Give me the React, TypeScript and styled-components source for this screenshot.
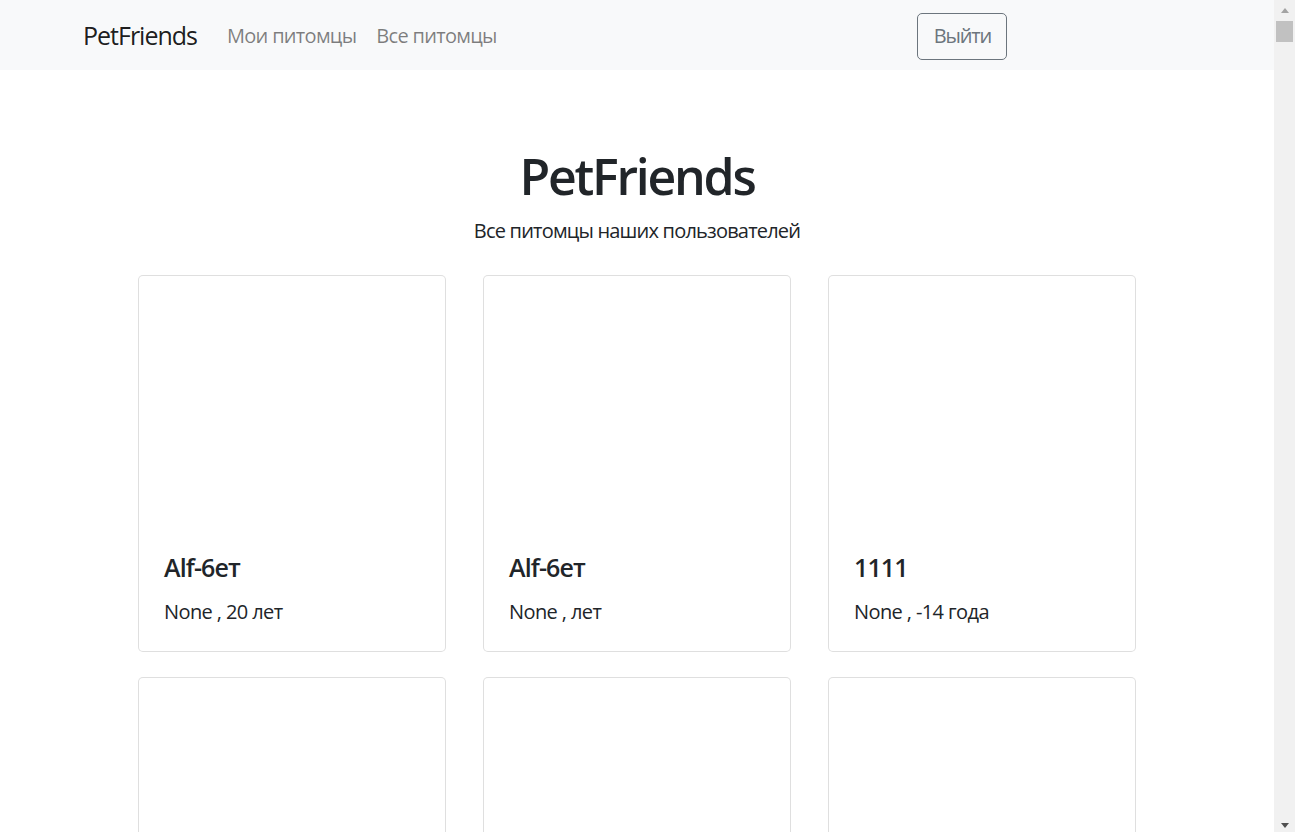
import React from "react";
import styled, { createGlobalStyle } from "styled-components";

const GlobalStyle = createGlobalStyle`
  html, body { margin: 0; padding: 0; height: 100%; overflow: hidden; }
  body {
    font-family: "Open Sans", "Noto Sans", "Liberation Sans", sans-serif;
    color: #212529;
    background: #fff;
  }
  * { box-sizing: border-box; }
`;

const Shell = styled.div`
  display: flex;
  width: 100vw;
  height: 100vh;
  overflow: hidden;
`;

const Page = styled.div`
  flex: 1;
  min-width: 0;
  overflow: hidden;
  display: flex;
  flex-direction: column;
`;

const Navbar = styled.nav`
  height: 70px;
  flex: none;
  background: #f8f9fa;
  display: flex;
  align-items: center;
  padding: 11px 0 9px 83px;
`;

const Brand = styled.a`
  font-size: 25px;
  line-height: 37.5px;
  padding: 6.25px 0;
  margin-right: 20px;
  color: rgba(0, 0, 0, 0.9);
  text-decoration: none;
  letter-spacing: -0.04em;
`;

const NavLink = styled.a`
  font-size: 20px;
  line-height: 30px;
  padding: 10px 10px;
  color: rgba(0, 0, 0, 0.5);
  text-decoration: none;
  letter-spacing: -0.035em;
`;

const LogoutButton = styled.button`
  margin-left: auto;
  margin-right: 267px;
  height: 47px;
  padding: 7px 15px 7px 16px;
  font-family: inherit;
  font-size: 20px;
  line-height: 30px;
  color: #6c757d;
  background: transparent;
  border: 1px solid #6c757d;
  border-radius: 5px;
  letter-spacing: -0.06em;
`;

const Hero = styled.header`
  text-align: center;
  padding-top: 76px;
`;

const Title = styled.h1`
  margin: 0;
  font-size: 50px;
  line-height: 60px;
  font-weight: 600;
  letter-spacing: -0.045em;
`;

const Subtitle = styled.p`
  margin: 10px 0 0;
  font-size: 20px;
  line-height: 30px;
  letter-spacing: -0.04em;
`;

const Grid = styled.section`
  display: grid;
  grid-template-columns: repeat(3, 308px);
  column-gap: 37px;
  row-gap: 25px;
  justify-content: center;
  margin-top: 29px;
`;

const Card = styled.article`
  border: 1px solid rgba(0, 0, 0, 0.125);
  border-radius: 5px;
  background: #fff;
  display: flex;
  flex-direction: column;
`;

const CardImage = styled.div`
  height: 250px;
`;

const CardBody = styled.div`
  padding: 26px 25px 24px;
`;

const CardTitle = styled.h5`
  margin: 0 0 15px;
  font-size: 25px;
  line-height: 30px;
  font-weight: 600;
  letter-spacing: -0.035em;
`;

const CardText = styled.p`
  margin: 0;
  font-size: 20px;
  line-height: 30px;
  letter-spacing: -0.03em;
`;

const Scrollbar = styled.div`
  width: 21px;
  flex: none;
  background: #f1f1f1;
  display: flex;
  flex-direction: column;
  align-items: center;
`;

const Arrow = styled.div<{ $down?: boolean }>`
  width: 21px;
  height: 21px;
  flex: none;
  display: flex;
  align-items: center;
  justify-content: center;
  &::before {
    content: "";
    width: 0;
    height: 0;
    border-left: 4.5px solid transparent;
    border-right: 4.5px solid transparent;
    ${(p) =>
      p.$down
        ? "border-top: 5px solid #505050; margin-top: 8px;"
        : "border-bottom: 5px solid #a3a3a3; margin-top: -1px;"}
  }
`;

const Thumb = styled.div`
  width: 17px;
  height: 21px;
  flex: none;
  background: #c1c1c1;
`;

const Track = styled.div`
  flex: 1;
`;

type Pet = { name: string; info: string };

const pets: Pet[] = [
  { name: "Alf-6ет", info: "None , 20 лет" },
  { name: "Alf-6ет", info: "None , лет" },
  { name: "1111", info: "None , -14 года" },
  { name: "", info: "" },
  { name: "", info: "" },
  { name: "", info: "" },
];

export default function App() {
  return (
    <Shell>
      <GlobalStyle />
      <Page>
        <Navbar>
          <Brand href="#">PetFriends</Brand>
          <NavLink href="#">Мои питомцы</NavLink>
          <NavLink href="#">Все питомцы</NavLink>
          <LogoutButton>Выйти</LogoutButton>
        </Navbar>
        <Hero>
          <Title>PetFriends</Title>
          <Subtitle>Все питомцы наших пользователей</Subtitle>
        </Hero>
        <Grid>
          {pets.map((p, i) => (
            <Card key={i}>
              <CardImage />
              <CardBody>
                <CardTitle>{p.name || "\u00a0"}</CardTitle>
                <CardText>{p.info || "\u00a0"}</CardText>
              </CardBody>
            </Card>
          ))}
        </Grid>
      </Page>
      <Scrollbar>
        <Arrow />
        <Thumb />
        <Track />
        <Arrow $down />
      </Scrollbar>
    </Shell>
  );
}
